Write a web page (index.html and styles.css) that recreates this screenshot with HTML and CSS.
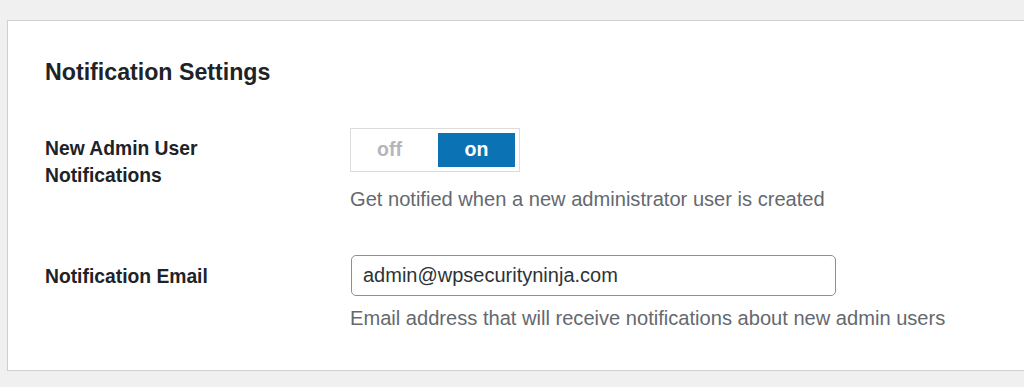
FILE: index.html
```html
<!DOCTYPE html>
<html lang="en">
<head>
<meta charset="utf-8">
<title>Notification Settings</title>
<link rel="stylesheet" href="styles.css">
</head>
<body>
<div class="card">
  <h2 class="title">Notification Settings</h2>
  <div class="form">
    <div class="label">New Admin User<br>Notifications</div>
    <div class="field">
      <div class="toggle">
        <span class="seg off">off</span>
        <span class="seg on">on</span>
      </div>
      <p class="desc desc-toggle">Get notified when a new administrator user is created</p>
    </div>
    <div class="label label-email">Notification Email</div>
    <div class="field field-email">
      <div class="input">admin@wpsecurityninja.com</div>
      <p class="desc desc-email">Email address that will receive notifications about new admin users</p>
    </div>
  </div>
</div>
</body>
</html>
```

FILE: styles.css
```css
html, body {
  margin: 0;
  padding: 0;
  background: #f0f0f0;
  overflow: hidden;
  font-family: "Liberation Sans", Arial, sans-serif;
}
body {
  padding: 20px 0 0 7px;
}
.card {
  width: 1040px;
  background: #ffffff;
  border: 1px solid #cfcfcf;
  box-shadow: 0 1px 1px rgba(0,0,0,0.04);
  padding: 38px 0 0 37px;
  box-sizing: border-box;
  height: 351px;
}
.title {
  margin: 0;
  font-size: 23.2px;
  line-height: 27.6px;
  font-weight: 700;
  color: #1d2327;
}
.form {
  display: grid;
  grid-template-columns: 305px 1fr;
  margin-top: 41px;
}
.label {
  font-size: 19.3px;
  line-height: 27px;
  font-weight: 700;
  color: #1d2327;
  margin-top: 7px;
}
.label-email {
  margin-top: 50px;
}
.field-email {
  margin-top: 42px;
}
.toggle {
  display: inline-flex;
  border: 1px solid #dcdcde;
  padding: 4px;
  height: 34px;
}
.seg {
  display: flex;
  align-items: center;
  justify-content: center;
  font-size: 19.5px;
  font-weight: 700;
}
.off {
  width: 83px;
  box-sizing: border-box;
  padding-right: 14px;
  color: #b4b6b9;
}
.on {
  width: 77px;
  background: #0b73b4;
  color: #ffffff;
}
.desc {
  margin: 0;
  font-size: 20.1px;
  line-height: 28px;
  color: #646970;
}
.desc-toggle {
  margin-top: 13px;
}
.input {
  width: 485px;
  height: 41px;
  box-sizing: border-box;
  border: 1px solid #8c8f94;
  border-radius: 5px;
  padding: 0 11px;
  margin-left: 1px;
  display: flex;
  align-items: center;
  font-size: 20px;
  color: #2c3338;
}
.desc-email {
  margin-top: 8px;
}
```
